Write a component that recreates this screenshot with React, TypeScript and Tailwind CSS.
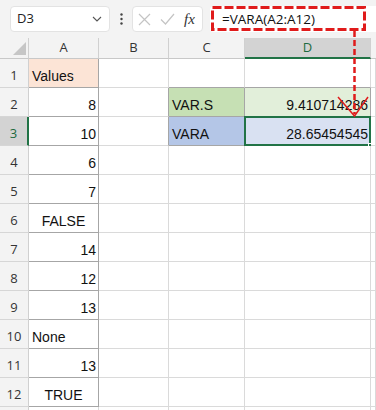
import React from 'react';

type Cell = {
  t?: string;
  align?: 'l' | 'r' | 'c';
  bg?: string;
  dark?: boolean; // applied cell borders (right + bottom)
  darkB?: boolean; // only bottom border applied
  darkR?: boolean; // only right border applied
};

const colW = ['w-[70px]', 'w-[70px]', 'w-[76px]', 'w-[126px]', 'flex-1'];

const A = (t: string, align: 'l' | 'r' | 'c' = 'r', bg?: string): Cell => ({ t, align, bg, dark: true });

const rows: Cell[][] = [
  [A('Values', 'l', 'bg-[#fce4d6]'), {}, { darkB: true }, { darkB: true }, {}],
  [A('8'), { darkR: true }, { t: 'VAR.S', align: 'l', bg: 'bg-[#c6e0b4]', dark: true }, { t: '9.410714286', align: 'r', bg: 'bg-[#e2efda]', dark: true }, {}],
  [A('10'), { darkR: true }, { t: 'VARA', align: 'l', bg: 'bg-[#b4c6e7]', dark: true }, { t: '28.65454545', align: 'r', bg: 'bg-[#d9e1f2]', dark: true }, {}],
  [A('6'), {}, {}, {}, {}],
  [A('7'), {}, {}, {}, {}],
  [A('FALSE', 'c'), {}, {}, {}, {}],
  [A('14'), {}, {}, {}, {}],
  [A('12'), {}, {}, {}, {}],
  [A('13'), {}, {}, {}, {}],
  [A('None', 'l'), {}, {}, {}, {}],
  [A('13'), {}, {}, {}, {}],
  [A('TRUE', 'c'), {}, {}, {}, {}],
  [{}, {}, {}, {}, {}],
];

const GridCell = ({ c, w, selected }: { c: Cell; w: string; selected?: boolean }) => {
  const rightDark = c.dark || c.darkR;
  const bottomDark = c.dark || c.darkB;
  const justify = c.align === 'r' ? 'justify-end pr-[2px]' : c.align === 'c' ? 'justify-center' : 'justify-start pl-[3px]';
  return (
    <div
      className={`relative flex h-full items-end pb-[3px] border-r border-b ${w} ${justify} ${c.bg ?? 'bg-white'} ${
        rightDark ? 'border-r-[#a6a6a6]' : 'border-r-[#dadada]'
      } ${bottomDark ? 'border-b-[#a6a6a6]' : 'border-b-[#dadada]'}`}
    >
      {c.t && <span className="text-[14px] leading-[16px] text-[#111]">{c.t}</span>}
      {selected && (
        <>
          <div className="absolute -left-[1px] -top-[1px] -right-[1px] -bottom-[1px] border-2 border-[#217346]" />
          <div className="absolute -right-[4px] -bottom-[4px] h-[6px] w-[6px] bg-[#217346] border border-white" />
        </>
      )}
    </div>
  );
};

export default function App() {
  return (
    <div className="relative h-[410px] w-[376px] overflow-hidden bg-white font-['Liberation_Sans',sans-serif]">
      {/* Formula bar */}
      <div className="flex h-[38px] items-center bg-[#f3f3f3] font-['Open_Sans',sans-serif]">
        <div className="ml-[10px] flex h-[26px] w-[100px] items-center justify-between rounded-[4px] border border-[#e3e3e3] bg-white pl-[6px] pr-[7px]">
          <span className="text-[13px] text-[#222]">D3</span>
          <svg width="10" height="6" viewBox="0 0 10 6">
            <path d="M1 1l4 4 4-4" fill="none" stroke="#555" strokeWidth="1.1" />
          </svg>
        </div>
        <div className="flex w-[22px] justify-center">
          <svg width="3" height="12" viewBox="0 0 3 12">
            <circle cx="1.5" cy="1.5" r="1.2" fill="#444" />
            <circle cx="1.5" cy="6" r="1.2" fill="#444" />
            <circle cx="1.5" cy="10.5" r="1.2" fill="#444" />
          </svg>
        </div>
        <div className="flex h-[26px] w-[71px] items-center rounded-[4px] border border-[#e3e3e3] bg-white pl-[5px]">
          <svg width="13" height="13" viewBox="0 0 13 13">
            <path d="M1 1l11 11M12 1L1 12" stroke="#c4c4c4" strokeWidth="1.2" />
          </svg>
          <svg className="ml-[9px]" width="15" height="12" viewBox="0 0 15 12">
            <path d="M1 6.5l4.5 4.5L14 1" fill="none" stroke="#c4c4c4" strokeWidth="1.2" />
          </svg>
          <span className="ml-[9px] font-['Liberation_Serif',serif] text-[15px] italic text-[#333]">fx</span>
        </div>
        <div className="ml-[7px] flex h-[26px] flex-1 items-center rounded-l-[4px] bg-white pl-[12px]">
          <span className="text-[13.5px] text-[#111]">=VARA(A2:A12)</span>
        </div>
      </div>

      {/* Column headers */}
      <div className="flex h-[21px] font-['Open_Sans',sans-serif] text-[13px] text-[#333]">
        <div className="relative w-[29px] border-r border-b border-r-[#d0d0d0] border-b-[#c8c8c8] bg-[#f3f3f3]">
          <svg className="absolute left-0 top-0" width="29" height="21" viewBox="0 0 29 21">
            <path d="M13 17h13V4z" fill="#c6c6c6" />
          </svg>
        </div>
        {['A', 'B', 'C'].map((l, i) => (
          <div
            key={l}
            className={`flex items-end justify-center pb-[1px] border-r border-b border-r-[#d0d0d0] border-b-[#c8c8c8] bg-[#f3f3f3] ${colW[i]}`}
          >
            {l}
          </div>
        ))}
        <div className="flex w-[126px] items-end justify-center border-r border-r-[#d0d0d0] border-b-2 border-b-[#217346] bg-[#d3d3d3] text-[#1d6b40]">
          D
        </div>
        <div className="flex-1 border-b border-b-[#c8c8c8] bg-[#f3f3f3]" />
      </div>

      {/* Rows */}
      {rows.map((r, i) => {
        const sel = i === 2;
        return (
          <div key={i} className="flex h-[29px]">
            <div
              className={`flex w-[29px] items-end justify-center pb-[2px] font-['Open_Sans',sans-serif] text-[13px] border-b border-b-[#d6d6d6] ${
                sel ? 'bg-[#d3d3d3] text-[#1d6b40] border-r-2 border-r-[#217346]' : 'bg-[#f3f3f3] text-[#333] border-r border-r-[#d0d0d0]'
              }`}
            >
              {i < 12 ? i + 1 : ''}
            </div>
            {r.map((c, j) => (
              <GridCell key={j} c={c} w={colW[j]} selected={sel && j === 3} />
            ))}
          </div>
        );
      })}

      {/* Red annotation */}
      <svg className="pointer-events-none absolute left-0 top-0" width="376" height="410" viewBox="0 0 376 410">
        <rect x="212.5" y="7.5" width="152" height="22" fill="none" stroke="#e01b1b" strokeWidth="3" strokeDasharray="9 3" />
        <line x1="354.5" y1="31" x2="354.5" y2="114" stroke="#e01b1b" strokeWidth="2.5" strokeDasharray="6 3" />
        <polyline points="338,97 354.5,116 368,97" fill="none" stroke="#e01b1b" strokeWidth="1.5" />
      </svg>
    </div>
  );
}
